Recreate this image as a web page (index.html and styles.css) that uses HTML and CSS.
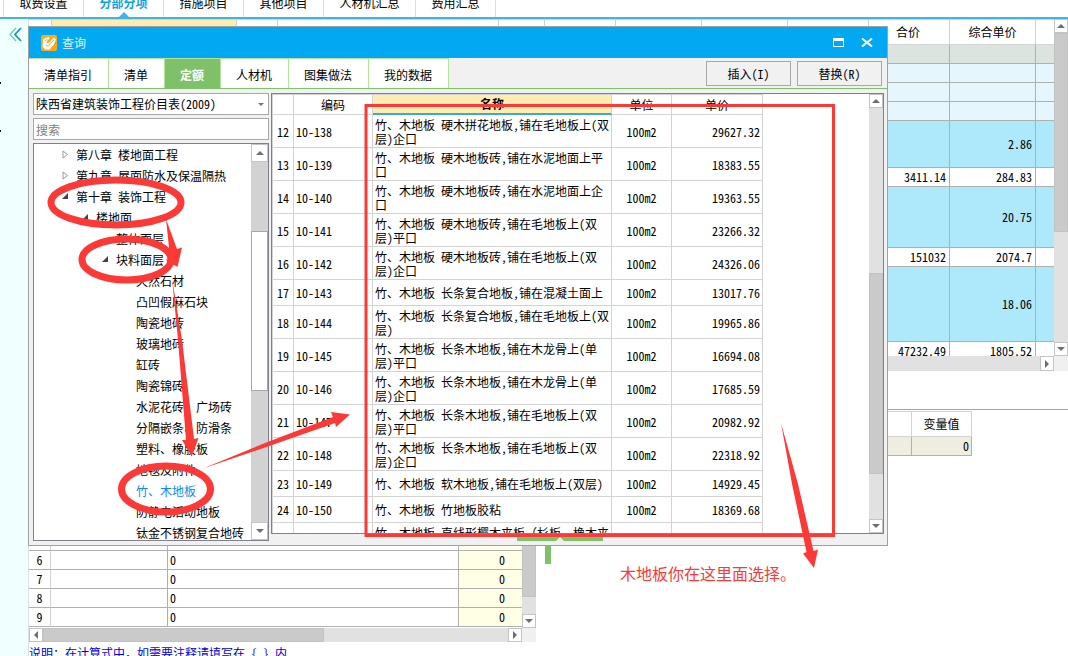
FILE: index.html
```html
<!DOCTYPE html>
<html lang="zh-CN">
<head>
<meta charset="utf-8">
<title>查询</title>
<link rel="stylesheet" href="styles.css">
</head>
<body>
<div class="app">
  <nav class="top-tabs">
    <a href="#">取费设置</a><a href="#" class="current">分部分项<svg class="pointer" width="10" height="5" viewBox="0 0 10 5"><path d="M0 5L5 0L10 5Z" fill="#3fb4e6"/></svg></a><a href="#">措施项目</a><a href="#">其他项目</a><a href="#" class="wide">人材机汇总</a><a href="#">费用汇总</a>
  </nav>
  <div class="work">
    <aside class="rail">
      <svg width="13" height="15" viewBox="0 0 13 15" fill="none"><path d="M7 1L1 7.500L7 14" stroke="#6cc3d8" stroke-width="1.300"/><path d="M12 1L6 7.500L12 14" stroke="#0f9cba" stroke-width="1.800"/></svg>
      <span class="mark"></span><span class="mark"></span>
    </aside>
    <main class="main">
      <section class="upper">
        <div class="upper-row">
          <div class="grid-view">
            <table class="bill">
              <colgroup><col class="b1"><col class="b2"><col class="b3"><col class="b4"><col class="b5"><col class="b6"><col class="b7"><col class="b7"><col class="b8"><col class="b8"><col class="b7"><col></colgroup>
              <thead><tr><th></th><th class="picked"></th><th></th><th></th><th></th><th></th><th></th><th></th><th></th><th class="near">合价</th><th>综合单价</th><th></th></tr></thead>
              <tbody>
                <tr class="gray"><td colspan="9"></td><td></td><td></td><td></td></tr>
                <tr class="pale"><td colspan="9"></td><td></td><td></td><td></td></tr>
                <tr class="pale"><td colspan="9"></td><td></td><td></td><td></td></tr>
                <tr class="pale"><td colspan="9"></td><td></td><td></td><td></td></tr>
                <tr class="blue h47"><td colspan="9"></td><td></td><td>2.86</td><td></td></tr>
                <tr><td colspan="9"></td><td>3411.14</td><td>284.83</td><td></td></tr>
                <tr class="blue h61"><td colspan="9"></td><td></td><td>20.75</td><td></td></tr>
                <tr><td colspan="9"></td><td>151032</td><td>2074.7</td><td></td></tr>
                <tr class="blue h75"><td colspan="9"></td><td></td><td>18.06</td><td></td></tr>
                <tr><td colspan="9"></td><td>47232.49</td><td>1805.52</td><td></td></tr>
              </tbody>
            </table>
          </div>
          <div class="vbar">
            <button aria-label="向上"><svg width="8" height="4"><path d="M0 4L4 0L8 4Z"/></svg></button>
            <div class="thumb t199"></div><div class="track"></div>
            <button aria-label="向下"><svg width="8" height="4"><path d="M0 0L4 4L8 0Z"/></svg></button>
          </div>
        </div>
        <div class="hbar"><div class="track"></div><button aria-label="向右"><svg width="4" height="8"><path d="M0 0L4 4L0 8Z"/></svg></button><span class="corner"></span></div>
      </section>
      <section class="lower">
        <div class="left-pane">
          <div class="upper-row">
            <div class="grid-view">
              <table class="fees">
                <colgroup><col class="f1"><col class="f2"><col><col class="f4"></colgroup>
                <thead><tr><th></th><th></th><th></th><th></th></tr></thead>
                <tbody>
                  <tr><th></th><td></td><td></td><td></td></tr>
                  <tr><th></th><td></td><td></td><td></td></tr>
                  <tr><th></th><td></td><td></td><td></td></tr>
                  <tr><th></th><td></td><td></td><td></td></tr>
                  <tr><th></th><td></td><td></td><td></td></tr>
                  <tr><th>6</th><td></td><td>0</td><td>0</td></tr>
                  <tr><th>7</th><td></td><td>0</td><td>0</td></tr>
                  <tr><th>8</th><td></td><td>0</td><td>0</td></tr>
                  <tr><th>9</th><td></td><td>0</td><td>0</td></tr>
                </tbody>
              </table>
            </div>
            <div class="vbar">
              <button aria-label="向上"><svg width="8" height="4"><path d="M0 4L4 0L8 4Z"/></svg></button>
              <div class="thumb t173"></div><div class="track"></div>
              <button aria-label="向下"><svg width="8" height="4"><path d="M0 0L4 4L8 0Z"/></svg></button>
            </div>
          </div>
          <div class="hbar"><button aria-label="向左"><svg width="4" height="8"><path d="M4 0L0 4L4 8Z"/></svg></button><div class="thumb w280"></div><div class="track"></div><button aria-label="向右"><svg width="4" height="8"><path d="M0 0L4 4L0 8Z"/></svg></button><span class="corner"></span></div>
          <p class="note"><span class="full">说明：在计算式中，如需要注释请填写在</span> { } 内</p>
        </div>
        <div class="right-pane">
          <span class="strip"></span>
          <table class="vars">
            <colgroup><col class="v1"><col class="v2"></colgroup>
            <thead><tr><th></th><th>变量值</th></tr></thead>
            <tbody><tr><td></td><td>0</td></tr></tbody>
          </table>
        </div>
      </section>
    </main>
  </div>

  <div class="dialog" role="dialog" aria-labelledby="dlg-title">
    <header class="title-bar">
      <svg width="16" height="16" viewBox="0 0 16 16"><rect width="16" height="16" rx="2" fill="#fba91d"/><path d="M2 4.500L5.500 2.500L8 2L8.500 3.500L6 6L5.500 8.500L7.500 8L13 2.500L15 4.500L12.500 10L8.500 14.500L4 14.500L1.500 11.500L2 8Z" fill="#fff"/><path d="M5 10.500L7.500 11L13.500 4.500M3.500 6.500L6.500 4" stroke="#fba91d" fill="none"/></svg>
      <h1 id="dlg-title">查询</h1>
      <button aria-label="最大化"><svg width="11" height="9" viewBox="0 0 11 9"><path d="M0 0H11V9H0ZM1 3V8H10V3Z" fill="#fff" fill-rule="evenodd"/></svg></button>
      <button aria-label="关闭"><svg width="12" height="9" viewBox="0 0 12 9"><path d="M1 0.500L11 8.500M11 0.500L1 8.500" stroke="#fff" stroke-width="2"/></svg></button>
    </header>
    <div class="tool-row">
      <nav class="dlg-tabs"><a href="#">清单指引</a><a href="#">清单</a><a href="#" class="current">定额</a><a href="#">人材机</a><a href="#">图集做法</a><a href="#">我的数据</a></nav>
      <div class="actions"><button>插入(I)</button><button>替换(R)</button></div>
    </div>
    <div class="dlg-body">
      <div class="finder">
        <div class="picker"><select aria-label="价目表"><option>陕西省建筑装饰工程价目表(2009)</option></select><svg width="6" height="3"><path d="M0 0H6L3 3Z" fill="#777"/></svg></div>
        <input type="text" placeholder="搜索" aria-label="搜索">
        <div class="tree-box">
          <ul class="tree">
            <li><svg class="tw" width="7" height="9"><path d="M1 1V8L5.500 4.500Z" fill="none" stroke="#999"/></svg>第八章 楼地面工程</li>
            <li><svg class="tw" width="7" height="9"><path d="M1 1V8L5.500 4.500Z" fill="none" stroke="#999"/></svg>第九章 屋面防水及保温隔热</li>
            <li><svg class="tw" width="7" height="9"><path d="M6 1V7H0Z" fill="#444"/></svg>第十章 装饰工程
              <ul>
                <li><svg class="tw" width="7" height="9"><path d="M6 1V7H0Z" fill="#444"/></svg>楼地面
                  <ul>
                    <li>整体面层</li>
                    <li><svg class="tw" width="7" height="9"><path d="M6 1V7H0Z" fill="#444"/></svg>块料面层
                      <ul>
                        <li>天然石材</li><li>凸凹假麻石块</li><li>陶瓷地砖</li><li>玻璃地砖</li><li>缸砖</li><li>陶瓷锦砖</li><li>水泥花砖、广场砖</li><li>分隔嵌条、防滑条</li><li>塑料、橡胶板</li><li>地毯及附件</li><li class="chosen">竹、木地板</li><li>防静电活动地板</li><li>钛金不锈钢复合地砖</li>
                      </ul>
                    </li>
                  </ul>
                </li>
              </ul>
            </li>
          </ul>
          <div class="vbar broad">
            <button aria-label="向上"><svg width="8" height="4"><path d="M0 4L4 0L8 4Z"/></svg></button>
            <div class="gap70"></div><div class="thumb t160"></div><div class="track"></div>
            <button aria-label="向下"><svg width="8" height="4"><path d="M0 0L4 4L8 0Z"/></svg></button>
          </div>
        </div>
      </div>
      <div class="results">
        <div class="result-box">
          <div class="grid-view">
            <table class="quota">
              <colgroup><col class="q1"><col class="q2"><col class="q3"><col class="q4"><col class="q5"></colgroup>
              <thead><tr><th></th><th>编码</th><th class="sorted">名称</th><th>单位</th><th>单价</th></tr></thead>
              <tbody>
                <tr><td>12</td><td>10-138</td><td>竹、木地板 硬木拼花地板,铺在毛地板上(双<br>层)企口</td><td>100m2</td><td>29627.32</td></tr>
                <tr><td>13</td><td>10-139</td><td>竹、木地板 硬木地板砖,铺在水泥地面上平<br>口</td><td>100m2</td><td>18383.55</td></tr>
                <tr><td>14</td><td>10-140</td><td>竹、木地板 硬木地板砖,铺在水泥地面上企<br>口</td><td>100m2</td><td>19363.55</td></tr>
                <tr><td>15</td><td>10-141</td><td>竹、木地板 硬木地板砖,铺在毛地板上(双<br>层)平口</td><td>100m2</td><td>23266.32</td></tr>
                <tr><td>16</td><td>10-142</td><td>竹、木地板 硬木地板砖,铺在毛地板上(双<br>层)企口</td><td>100m2</td><td>24326.06</td></tr>
                <tr class="single"><td>17</td><td>10-143</td><td>竹、木地板 长条复合地板,铺在混凝土面上</td><td>100m2</td><td>13017.76</td></tr>
                <tr><td>18</td><td>10-144</td><td>竹、木地板 长条复合地板,铺在毛地板上(双<br>层)</td><td>100m2</td><td>19965.86</td></tr>
                <tr><td>19</td><td>10-145</td><td>竹、木地板 长条木地板,铺在木龙骨上(单<br>层)平口</td><td>100m2</td><td>16694.08</td></tr>
                <tr><td>20</td><td>10-146</td><td>竹、木地板 长条木地板,铺在木龙骨上(单<br>层)企口</td><td>100m2</td><td>17685.59</td></tr>
                <tr><td>21</td><td>10-147</td><td>竹、木地板 长条木地板,铺在毛地板上(双<br>层)平口</td><td>100m2</td><td>20982.92</td></tr>
                <tr><td>22</td><td>10-148</td><td>竹、木地板 长条木地板,铺在毛地板上(双<br>层)企口</td><td>100m2</td><td>22318.92</td></tr>
                <tr class="single"><td>23</td><td>10-149</td><td>竹、木地板 软木地板,铺在毛地板上(双层)</td><td>100m2</td><td>14929.45</td></tr>
                <tr class="single"><td>24</td><td>10-150</td><td>竹、木地板 竹地板胶粘</td><td>100m2</td><td>18369.68</td></tr>
                <tr><td></td><td></td><td>竹、木地板 <span class="full">直线形樱木夹板（杉板、橡木夹</span><br>&nbsp;</td><td></td><td></td></tr>
              </tbody>
            </table>
          </div>
          <div class="vbar">
            <button aria-label="向上"><svg width="8" height="4"><path d="M0 4L4 0L8 4Z"/></svg></button>
            <div class="track t165"></div><div class="thumb t201"></div><div class="track"></div>
            <button aria-label="向下"><svg width="8" height="4"><path d="M0 0L4 4L8 0Z"/></svg></button>
          </div>
        </div>
        <button class="pull" aria-label="展开"><svg width="8" height="4"><path d="M0 4L4 0L8 4Z"/></svg></button>
      </div>
    </div>
  </div>

  <svg class="ink" width="1068" height="656" viewBox="0 0 1068 656">
    <rect x="366" y="105.500" width="467.500" height="430"/>
    <ellipse cx="116" cy="202.500" rx="65" ry="22.500"/>
    <ellipse cx="126.500" cy="259.500" rx="44.500" ry="20.500"/>
    <ellipse cx="166" cy="489" rx="44.500" ry="23"/>
    <path d="M166 219L177 249L182 247.500L177.500 267L166 260L170 257Z"/>
    <path d="M172 278L182 340L194 439L198.500 438L191.700 456.500L182 440L186 440L178 340Z"/>
    <path d="M203 468.500L265 443L333 417L331 412L350 414.500L336 427L335 423L265 447.500Z"/>
    <path d="M781 423L798 484L813.500 551L818 549.500L814 568L803 553.500L806.500 552L792 484Z"/>
  </svg>
  <p class="remark">木地板你在这里面选择。</p>
</div>
</body>
</html>
```
FILE: styles.css
```css
* { box-sizing: border-box; }
body, h1, p, ul { margin: 0; padding: 0; }
body, button, input, select {
  font: 12px/14px "Noto Sans CJK SC", sans-serif;
  font-feature-settings: "hwid";
  color: #000;
}
body { overflow: hidden; background: #fff; }
a { color: inherit; text-decoration: none; }
button { padding: 0; border: 0; background: none; }
ul { list-style: none; }
table { border-collapse: separate; border-spacing: 0; table-layout: fixed; width: 100%; }
th, td { padding: 0; font-weight: 400; border: 0 solid #b0b0b0; border-width: 0 1px 1px 0; white-space: nowrap; }
.full { font-feature-settings: normal; }

.app { position: relative; height: 100vh; display: flex; flex-direction: column; overflow: hidden; }

.top-tabs { flex: none; display: flex; height: 19px; padding-left: 3px; border-bottom: 2px solid #3fb4e6; overflow: hidden; }
.top-tabs a { position: relative; width: 80px; line-height: 6px; text-align: center; border-left: 1px solid #dcdcdc; }
.top-tabs a.wide { width: 92px; }
.top-tabs a:last-child { width: 81px; border-right: 1px solid #dcdcdc; }
.top-tabs .current { color: #12a0e4; font-weight: 700; }
.pointer { position: absolute; left: 35px; bottom: 0; }

.work { flex: 1; min-height: 0; display: flex; }
.rail { flex: none; width: 29px; background: #f0ffff; display: flex; flex-direction: column; border-right: 1px solid #d8e4e4; }
.rail svg { margin: 8px 0 40px 9px; }
.mark { width: 1px; height: 2px; margin-bottom: 46px; background: #000080; }
.main { flex: 1; min-width: 0; display: flex; flex-direction: column; }

.upper { flex: none; display: flex; flex-direction: column; height: 352px; }
.upper-row { flex: 1; min-height: 0; display: flex; }
.grid-view { flex: 1; min-width: 0; overflow: hidden; }
.b1 { width: 23px; } .b2 { width: 185px; } .b3 { width: 41px; } .b4 { width: 221px; }
.b5 { width: 46px; } .b6 { width: 71px; } .b7 { width: 86px; } .b8 { width: 81px; }
.bill th { height: 26px; border-color: #d3d3d3; border-top-width: 1px; }
.bill th.near { padding-right: 2px; }
.bill .picked { background: #ffecb0; }
.bill td { height: 19px; padding-right: 3px; text-align: right; }
.bill td:last-child, .bill th:last-child { border-right: 0; }
.gray td { background: #dbe4df; }
.pale td { background: #e5f7fc; }
.blue td { background: #aee8fb; }
.bill .h47 td { height: 47px; } .bill .h61 td { height: 61px; } .bill .h75 td { height: 75px; }

.vbar { flex: none; width: 14px; display: flex; flex-direction: column; background: #e1e1e1; }
.vbar button { flex: none; height: 14px; background: #fff; border: 1px solid #c4c4c4; display: flex; align-items: center; justify-content: center; }
.vbar path, .hbar path { fill: #6d6d78; }
.track { flex: 1; background: #e1e1e1; }
.thumb { flex: none; background: #cacaca; border: 1px solid #c2c2c2; }
.t199 { height: 199px; } .t173 { height: 173px; } .t201 { height: 201px; } .t160 { height: 160px; }
.track.t165 { flex: none; height: 165px; }
.hbar { flex: none; height: 15px; display: flex; background: #e1e1e1; }
.hbar button { flex: none; width: 14px; background: #fff; border: 1px solid #c4c4c4; display: flex; align-items: center; justify-content: center; }
.hbar .w280 { width: 281px; }
.corner { width: 14px; background: #f0f0f0; }

.lower { flex: 1; display: flex; margin-top: 38px; border-top: 1px solid #7cc36a; }
.left-pane { flex: none; width: 507px; display: flex; flex-direction: column; }
.left-pane .upper-row { flex: none; height: 218px; }
.left-pane .hbar { height: 14px; }
.f1 { width: 22px; } .f2 { width: 117px; } .f4 { width: 63px; }
.fees thead th { height: 46px; }
.fees td { height: 19px; padding-left: 2px; }
.fees tbody th { border-right-color: #d3d3d3; }
.fees td:last-child { background: #ffffe6; text-align: right; padding-right: 17px; border-right: 0; }
.note { color: #0000e0; line-height: 22px; white-space: nowrap; }
.right-pane { flex: 1; display: flex; align-items: flex-start; padding-left: 9px; }
.strip { width: 6px; height: 154px; background: #7fc168; }
.vars { width: 421px; margin-top: 1px; }
.v2 { width: 60px; }
.vars th { height: 26px; border-color: #d3d3d3; border-top-width: 1px; }
.vars td { height: 19px; background: #efeddf; text-align: right; padding-right: 2px; }

.dialog { position: absolute; left: 28px; top: 26px; right: 180px; bottom: 110px; display: flex; flex-direction: column; border: 1px solid #a0a0a0; background: #f1f1f1; }
.title-bar { flex: none; height: 31px; display: flex; align-items: center; gap: 5px; padding: 0 14px 0 12px; background: #02a8f2; }
.title-bar h1 { flex: 1; font-size: 12px; font-weight: 400; color: #e0f4fe; }
.title-bar button { display: flex; margin-left: 12px; }
.tool-row { flex: none; height: 31px; display: flex; justify-content: space-between; border-bottom: 1px solid #7cc36a; }
.dlg-tabs { display: flex; border-top: 1px solid #b2e59c; background: #fff; }
.dlg-tabs a { padding: 0 16px 0 15px; line-height: 31px; border-right: 1px solid #b2e59c; }
.dlg-tabs .current { background: #7fc168; color: #fff; font-weight: 700; }
.actions { display: flex; align-items: flex-start; gap: 6px; padding: 3px 5px 0 0; }
.actions button { width: 85px; height: 25px; background: #f1f1f1; border: 1px solid #a8a8a8; }

.dlg-body { flex: 1; min-height: 0; display: flex; gap: 2px; padding: 4px 3px 4px 4px; }
.finder { flex: none; width: 236px; display: flex; flex-direction: column; gap: 3px; }
.picker { position: relative; display: flex; }
.picker select { appearance: none; width: 100%; }
.picker svg { position: absolute; right: 5px; top: 10px; }
.picker select, .finder input { height: 22px; padding: 0 2px; border: 1px solid #a8a8a8; border-radius: 0; background: #fff; }
.finder input { width: 100%; }
.finder input::placeholder { color: #808080; opacity: 1; }
.tree-box { flex: 1; min-height: 0; display: flex; border: 1px solid #80808c; background: #fff; overflow: hidden; }
.tree { flex: 1; padding-left: 42px; line-height: 21px; white-space: nowrap; overflow: hidden; }
.tree ul { padding-left: 20px; }
.tree li { position: relative; }
.tw { position: absolute; left: -14px; top: 6px; }
.chosen { color: #0a8cf0; }
.broad { width: 17px; background: #d2d2d2; }
.broad button { height: 18px; }
.broad .thumb { background: #fff; border-color: #a8a8a8; }
.broad .track { background: #d2d2d2; }
.gap70 { flex: none; height: 69px; }

.results { flex: 1; min-width: 0; display: flex; flex-direction: column; align-items: center; gap: 3px; }
.result-box { flex: 1; min-height: 0; align-self: stretch; display: flex; border: 1px solid #80808c; background: #fff; }
.quota { width: 491px; border-left: 1px solid #d3d3d3; }
.q1 { width: 21px; } .q2 { width: 79px; } .q3 { width: 239px; } .q4 { width: 60px; } .q5 { width: 91px; }
.quota th { height: 21px; border-color: #d3d3d3; border-top-width: 1px; }
.quota .sorted { background: #ffecb0; font-weight: 700; border-bottom: 2px solid #3aa8d8; }
.quota td { height: 33px; padding: 2px 2px 0; border-color: #d3d3d3; }
.quota .single td { height: 26px; padding-top: 0; }
.quota td:nth-child(1) { padding-left: 0; padding-right: 0; text-align: center; }
.quota td:nth-child(4) { text-align: center; }
.quota td:nth-child(5) { text-align: right; }
.pull { flex: none; width: 86px; height: 4px; margin-right: 35px; background: #7fc168; display: flex; justify-content: center; }
.pull path { fill: #e8f5e2; }

.ink { position: absolute; left: 0; top: 0; pointer-events: none; fill: #fb3a38; }
.ink rect { fill: none; stroke: #fb3a38; stroke-width: 3; }
.ink ellipse { fill: none; stroke: #fb3a38; stroke-width: 7; }
.remark { position: absolute; left: 620px; top: 562px; font-size: 16px; line-height: 22px; color: #fb3a38; white-space: nowrap; }
```
